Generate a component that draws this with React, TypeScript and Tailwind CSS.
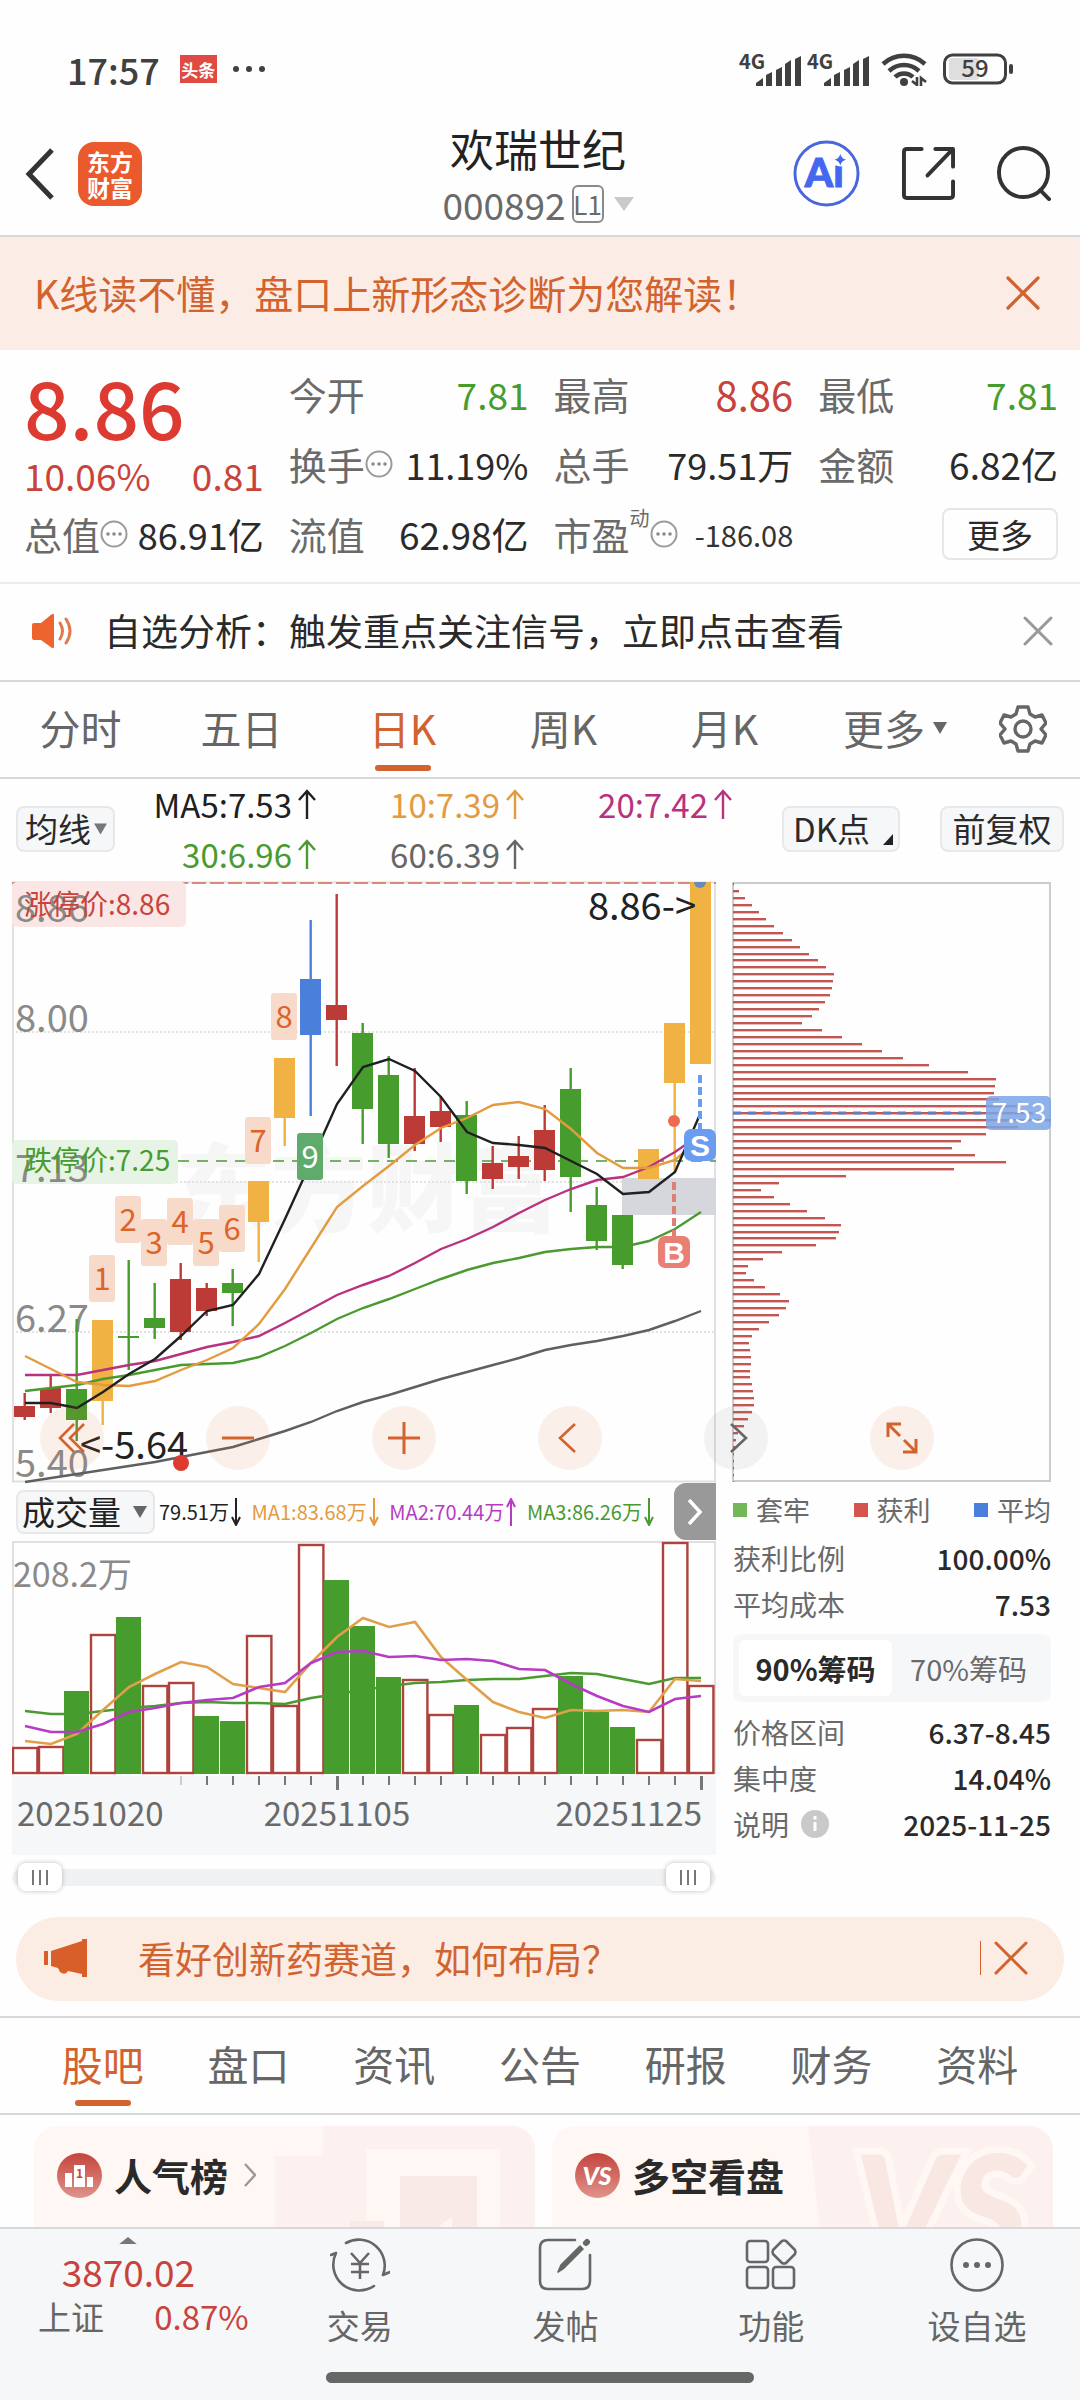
import React, { useState } from "react";
import { X } from "lucide-react";

type Tone = "red" | "green" | "yellow" | "blue";

const TONE: Record<Tone, string> = {
  red: "#bd3b36",
  green: "#479c2e",
  yellow: "#f0b243",
  blue: "#4a7fdb",
};

// [tone, high, body top, body bottom, low] in chart units
const CANDLES: [Tone, number, number, number, number][] = [
  ["red", 511, 524, 535, 538],
  ["red", 492, 506, 526, 531],
  ["green", 437, 507, 538, 559],
  ["yellow", 438, 438, 519, 543],
  ["green", 378, 454, 456, 488],
  ["green", 401, 436, 446, 457],
  ["red", 381, 397, 450, 458],
  ["red", 401, 406, 429, 434],
  ["green", 387, 401, 411, 444],
  ["yellow", 299, 299, 340, 380],
  ["yellow", 176, 176, 236, 264],
  ["blue", 38, 97, 153, 234],
  ["red", 12, 123, 138, 184],
  ["green", 141, 151, 227, 262],
  ["green", 174, 193, 262, 276],
  ["red", 186, 234, 262, 269],
  ["red", 214, 229, 245, 260],
  ["green", 219, 233, 299, 312],
  ["red", 264, 281, 297, 307],
  ["red", 254, 274, 285, 297],
  ["red", 223, 248, 288, 299],
  ["green", 186, 207, 295, 330],
  ["green", 305, 323, 359, 368],
  ["green", 333, 333, 383, 387],
  ["yellow", 267, 267, 297, 297],
  ["yellow", 141, 141, 201, 290],
  ["yellow", 0, 0, 182, 182],
];

const MA_LINES: { color: string; values: number[] }[] = [
  { color: "#5f5f5f", values: [600, 596, 592, 588, 584, 580, 575, 570, 565, 557, 549, 540, 529, 520, 513, 505, 497, 490, 483, 476, 468, 463, 459, 454, 448, 439, 429] },
  { color: "#4a9a30", values: [509, 506, 503, 497, 493, 488, 483, 482, 481, 475, 464, 451, 437, 426, 417, 407, 397, 388, 381, 376, 370, 367, 365, 365, 359, 347, 330] },
  { color: "#b8327f", values: [493, 493, 493, 488, 483, 479, 472, 465, 460, 454, 441, 427, 413, 403, 394, 381, 367, 357, 345, 331, 318, 307, 298, 295, 285, 270, 252] },
  { color: "#e39b3f", values: [474, 487, 500, 503, 504, 499, 488, 478, 466, 442, 407, 366, 325, 304, 284, 263, 246, 236, 223, 220, 227, 247, 271, 286, 286, 278, 256] },
  { color: "#202020", values: [521, 521, 526, 510, 492, 477, 454, 429, 423, 392, 337, 280, 222, 185, 177, 189, 215, 250, 261, 263, 266, 279, 292, 312, 310, 290, 230] },
];

const COUNTS = [373, 314, 337, 316, 337, 323, 235, 111, 251];

// [is a falling day, bar top]
const VOLUMES: [number, number][] = [
  [0, 206], [0, 205], [1, 150], [0, 93], [1, 76], [0, 144], [0, 141], [1, 175], [1, 180],
  [0, 94], [0, 164], [0, 3], [1, 39], [1, 85], [1, 136], [0, 138], [0, 173], [1, 164],
  [0, 193], [0, 186], [0, 167], [1, 135], [1, 171], [1, 186], [0, 198], [0, 1], [0, 144],
];

const VOLUME_LINES: { color: string; values: number[] }[] = [
  { color: "#4a9a30", values: [170, 173, 173, 170, 167, 165, 162, 161, 162, 162, 163, 157, 153, 149, 145, 142, 141, 139, 138, 138, 135, 132, 133, 138, 143, 137, 137] },
  { color: "#e0a04a", values: [200, 203, 193, 169, 146, 133, 121, 126, 143, 147, 151, 122, 96, 77, 86, 81, 116, 139, 161, 171, 177, 169, 170, 169, 171, 138, 140] },
  { color: "#b63cc4", values: [185, 191, 191, 183, 171, 167, 162, 159, 157, 146, 142, 122, 111, 110, 116, 115, 119, 118, 120, 128, 129, 143, 155, 165, 171, 158, 155] },
];

const CHIPS = [
  1, 6, 12, 19, 26, 33, 41, 50, 59, 67, 76, 85, 93, 101, 100, 99, 97, 92, 86, 79, 69, 89, 109, 129, 149, 170,
  196, 235, 263, 262, 261, 266, 284, 300, 318, 285, 253, 228, 219, 242, 273, 221, 113, 46, 28, 41, 57, 74, 92,
  108, 106, 103, 83, 49, 30, 15, 13, 21, 32, 47, 56, 53, 46, 36, 26, 19, 16, 17, 18, 18, 17, 17, 19, 20, 21,
  21, 19, 15, 11, 5, 3, 2, 1, 1, 1, 1, 1,
];

const path = (values: number[]) => values.map((v, i) => `${13 + i * 26},${v}`).join(" ");

function Dots() {
  return (
    <svg viewBox="0 0 28 28" className="size-7 shrink-0" aria-hidden="true">
      <circle cx="14" cy="14" r="12.5" fill="none" stroke="#9a9a9a" strokeWidth="2" />
      <g fill="#8a8a8a">
        <circle cx="8" cy="14" r="1.8" />
        <circle cx="14" cy="14" r="1.8" />
        <circle cx="20" cy="14" r="1.8" />
      </g>
    </svg>
  );
}

function Signal() {
  return (
    <svg viewBox="0 0 62 34" className="h-[34px] w-[62px] overflow-visible" aria-label="4G">
      <text x="0" y="17" fontSize="20" fontWeight="700" fill="#404040">4G</text>
      <g fill="#404040">
        <path d="M17 34v-3l7-5v8z" />
        <path d="M27 34V23l6-3v14z" />
        <path d="M37 34V18l6-3v19z" />
        <path d="M46 34V12l6-4v26z" />
        <path d="M56 34V7l6-3v30z" />
      </g>
    </svg>
  );
}

function StatusBar() {
  return (
    <div className="flex h-[114px] items-center pt-[24px] pr-[67px] pl-[67px] text-[#404040]">
      <span className="text-[36px] leading-none font-medium">17:57</span>
      <span className="ml-5 flex h-7 w-[37px] items-center justify-center bg-[#df4b43] text-[17px] leading-none font-bold text-white">
        头条
      </span>
      <span className="ml-4 flex gap-[7px]">
        <i className="size-[6px] rounded-full bg-[#404040]" />
        <i className="size-[6px] rounded-full bg-[#404040]" />
        <i className="size-[6px] rounded-full bg-[#404040]" />
      </span>
      <div className="ml-auto flex items-center">
        <Signal />
        <span className="w-[6px]" />
        <Signal />
        <svg viewBox="0 0 46 34" className="ml-3 h-[34px] w-[46px]" aria-hidden="true">
          <g fill="none" stroke="#404040" strokeWidth="4.5">
            <path d="M2 12a31 31 0 0 1 42 0" />
            <path d="M8 19a22 22 0 0 1 30 0" />
            <path d="M14 25a13 13 0 0 1 18 0" />
          </g>
          <circle cx="23" cy="30" r="4" fill="#404040" />
          <path d="M36 25v8l-5-4M40 34v-8l5 4" fill="none" stroke="#404040" strokeWidth="2.6" />
        </svg>
        <svg viewBox="0 0 70 32" className="ml-4 h-8 w-[70px] overflow-visible" aria-label="59%">
          <rect x="6" y="5" width="30" height="22" rx="3" fill="#dedede" />
          <rect x="1.5" y="2" width="61" height="28" rx="8" fill="none" stroke="#404040" strokeWidth="3" />
          <rect x="66" y="11" width="4" height="10" rx="2" fill="#404040" />
          <text x="32" y="24" textAnchor="middle" fontSize="24" fontWeight="500" fill="#404040">59</text>
        </svg>
      </div>
    </div>
  );
}

function Header() {
  return (
    <header className="grid h-[123px] grid-cols-[1fr_auto_1fr] items-center border-b-2 border-[#d8d8d8] pr-7 pb-[2px] pl-6">
      <div className="flex items-center gap-6">
        <button aria-label="返回">
          <svg viewBox="0 0 30 52" className="h-[52px] w-[30px]" fill="none" stroke="#333" strokeWidth="5">
            <path d="M28 2 5 26l23 24" />
          </svg>
        </button>
        <span className="flex size-16 flex-col items-center justify-center rounded-2xl bg-[#ea5a2d] text-[23px] leading-[26px] font-bold text-white">
          <span>东方</span>
          <span>财富</span>
        </span>
      </div>
      <div className="flex flex-col items-center">
        <h1 className="text-[44px] leading-[60px] text-[#222]">欢瑞世纪</h1>
        <button className="flex items-center text-[#6a6a6a]">
          <span className="text-[37px] leading-[52px]">000892</span>
          <span className="ml-[6px] flex h-[38px] w-8 items-center justify-center rounded-md border-2 border-[#8a8a8a] text-[26px] leading-none">
            L1
          </span>
          <svg viewBox="0 0 20 14" className="ml-[10px] h-[14px] w-5" aria-hidden="true">
            <path d="M0 0h20L10 14z" fill="#c9c9c9" />
          </svg>
        </button>
      </div>
      <div className="flex items-center justify-end gap-[42px]">
        <button aria-label="Ai">
          <svg viewBox="0 0 68 68" className="size-[67px]">
            <circle cx="34" cy="34" r="32" fill="none" stroke="#4a66dc" strokeWidth="3" />
            <text x="12" y="48" fontSize="41" fontWeight="900" fontFamily="Lato, sans-serif" fill="#4467f0" stroke="#4467f0" strokeWidth="1">Ai</text>
            <circle cx="48" cy="20" r="7" fill="#fff" />
            <path d="M48 14q1 5 6 6-5 1-6 6-1-5-6-6 5-1 6-6z" fill="#4467f0" />
          </svg>
        </button>
        <button aria-label="分享">
          <svg viewBox="0 0 54 54" className="size-[53px]" fill="none" stroke="#333" strokeWidth="4" strokeLinecap="round" strokeLinejoin="round">
            <path d="M20 2H5Q2 2 2 5v44q0 3 3 3h44q3 0 3-3V35" />
            <path d="M34 2h18v18M51 3 26 29" />
          </svg>
        </button>
        <button aria-label="搜索">
          <svg viewBox="0 0 56 56" className="size-[55px]" fill="none" stroke="#333" strokeWidth="4" strokeLinecap="round">
            <circle cx="27" cy="27" r="25" />
            <path d="m44 45 9 9" />
          </svg>
        </button>
      </div>
    </header>
  );
}

function Quote({ label, value, tone, info }: { label: string; value: string; tone: string; info?: boolean }) {
  return (
    <div className="flex items-center leading-none">
      <dt className="flex items-center text-[38px] text-[#6a6a6a]">
        {label}
        {info && <Dots />}
      </dt>
      <dd className={"ml-auto whitespace-nowrap " + tone}>{value}</dd>
    </div>
  );
}

function Quotes() {
  return (
    <section className="border-b-2 border-[#ececec] pt-[9px] pr-[22px] pb-[13px] pl-6">
      <dl className="grid auto-rows-[70px] grid-cols-4 gap-x-[25px]">
        <div className="row-span-2 flex flex-col text-[#c8433b]">
          <dt className="text-[80px] leading-[92px] font-medium text-[#dd3b32]">8.86</dt>
          <dd className="flex justify-between text-[37px] leading-[48px]">
            <span>10.06%</span>
            <span>0.81</span>
          </dd>
        </div>
        <Quote label="今开" value="7.81" tone="text-[37px] text-[#479c2e]" />
        <Quote label="最高" value="8.86" tone="text-[40px] text-[#c8433b]" />
        <Quote label="最低" value="7.81" tone="text-[37px] text-[#479c2e]" />
        <Quote label="换手" value="11.19%" tone="text-[36px] text-[#2a2a2a]" info />
        <Quote label="总手" value="79.51万" tone="text-[36px] text-[#2a2a2a]" />
        <Quote label="金额" value="6.82亿" tone="text-[37px] text-[#2a2a2a]" />
        <Quote label="总值" value="86.91亿" tone="text-[36px] text-[#2a2a2a]" info />
        <Quote label="流值" value="62.98亿" tone="text-[37px] text-[#2a2a2a]" />
        <div className="flex items-center leading-none">
          <dt className="flex items-center text-[38px] text-[#6a6a6a]">
            市盈
            <sup className="mb-3 text-[20px]">动</sup>
            <Dots />
          </dt>
          <dd className="ml-auto text-[29px] text-[#333]">-186.08</dd>
        </div>
        <div className="flex items-center justify-end">
          <button className="h-[52px] w-[116px] rounded-lg border-2 border-[#e6e6e6] text-[33px] leading-none text-[#2a2a2a]">
            更多
          </button>
        </div>
      </dl>
    </section>
  );
}

function Notice() {
  return (
    <section className="flex h-[98px] items-center border-b-2 border-[#d8d8d8] pr-4 pb-[3px] pl-8">
      <svg viewBox="0 0 40 34" className="h-[34px] w-10" aria-hidden="true">
        <path d="M2 9h7L20 0q2-1 2 2v30q0 3-2 2L9 26H2q-2 0-2-2V11q0-2 2-2z" fill="#ee642f" />
        <path d="M28 9q5 8 0 16M34 5q8 12 0 24" fill="none" stroke="#e07a4c" strokeWidth="3" strokeLinecap="round" />
      </svg>
      <p className="ml-8 text-[37px] leading-none text-[#2a2a2a]">自选分析：触发重点关注信号，立即点击查看</p>
      <button className="ml-auto text-[#999]" aria-label="关闭">
        <X className="size-[52px]" strokeWidth={1.4} />
      </button>
    </section>
  );
}

const PERIODS = ["分时", "五日", "日K", "周K", "月K"];

function PeriodTabs() {
  const [active, setActive] = useState("日K");
  return (
    <nav className="flex h-[97px] border-b-2 border-[#d8d8d8] text-[41px] leading-none text-[#666]">
      {PERIODS.map((p) => (
        <button
          key={p}
          onClick={() => setActive(p)}
          className={"relative flex-[161] pb-1 " + (p === active ? "text-[#d2632f]" : "")}
        >
          {p}
          {p === active && (
            <i className="absolute bottom-[6px] left-1/2 h-[6px] w-14 -translate-x-1/2 rounded-full bg-[#d2632f]" />
          )}
        </button>
      ))}
      <button className="flex flex-[180] items-center justify-center gap-2 pb-1">
        更多
        <svg viewBox="0 0 14 12" className="h-3 w-[14px]" aria-hidden="true">
          <path d="M0 0h14L7 12z" fill="#666" />
        </svg>
      </button>
      <button className="flex w-[95px] items-center pb-[2px] pl-[14px]" aria-label="设置">
        <Gear />
      </button>
    </nav>
  );
}

function Gear() {
  return (
    <svg viewBox="0 0 48 48" className="size-12" fill="none" stroke="#666" strokeWidth="3.4" strokeLinejoin="round">
      <path d="M19 2h10l2 7 5 3 7-2 4 8-5 6 5 6-4 8-7-2-5 3-2 7H19l-2-7-5-3-7 2-4-8 5-6-5-6 4-8 7 2 5-3z" />
      <circle cx="24" cy="24" r="8" />
    </svg>
  );
}

function Average({ text, tone }: { text: string; tone: string }) {
  return (
    <span className={"flex items-center justify-end gap-[6px] " + tone}>
      {text}
      <svg viewBox="0 0 18 30" className="h-[30px] w-[18px]" fill="none" stroke="currentColor" strokeWidth="2.4" aria-hidden="true">
        <path d="M9 30V2M1 11l8-9 8 9" />
      </svg>
    </span>
  );
}

function AverageBar() {
  return (
    <section className="flex h-[103px] items-center px-4 pb-1 text-[33px] leading-none text-[#2a2a2a]">
      <label className="relative block w-[99px] shrink-0">
        <select
          aria-label="均线"
          className="block h-[46px] w-full appearance-none rounded-lg border-2 border-[#e6e8ea] bg-[#f6f7f9] pl-[7px] leading-none"
        >
          <option>均线</option>
        </select>
        <svg viewBox="0 0 14 12" className="pointer-events-none absolute top-[17px] right-2 h-3 w-[13px]" aria-hidden="true">
          <path d="M0 0h14L7 12z" fill="#777" />
        </svg>
      </label>
      <div className="grid grid-cols-[201px_208px_208px] text-[33px] leading-[50px] whitespace-nowrap">
        <Average text="MA5:7.53" tone="text-[#202020]" />
        <Average text="10:7.39" tone="text-[#e39b3f]" />
        <Average text="20:7.42" tone="text-[#b8327f]" />
        <Average text="30:6.96" tone="text-[#4a9a30]" />
        <Average text="60:6.39" tone="text-[#666]" />
      </div>
      <div className="ml-auto flex gap-10">
        <button className="relative h-[46px] w-[118px] rounded-lg border-2 border-[#e6e8ea] bg-[#f6f7f9] pl-[9px] text-left">
          DK点
          <svg viewBox="0 0 10 11" className="absolute right-[5px] bottom-[5px] h-[11px] w-[10px]" aria-hidden="true">
            <path d="M10 0v11H0z" fill="#222" />
          </svg>
        </button>
        <button className="h-[46px] w-[124px] rounded-lg border-2 border-[#e6e8ea] bg-[#f6f7f9]">前复权</button>
      </div>
    </section>
  );
}

function PriceChart() {
  return (
    <svg viewBox="0 0 704 600" className="block h-auto w-full overflow-visible">
      <text x="163" y="342" fontSize="96" fontWeight="900" fill="#f6f6f7">东方财富</text>
      <rect x="1" y="0.5" width="702" height="599" fill="none" stroke="#e0e0e0" strokeWidth="2" />
      <path d="M0 150h704M0 300h704M0 450h704" stroke="#e2e2e2" strokeWidth="2" strokeDasharray="2 2" />
      <path d="M0 1h704" stroke="#d98a7c" strokeWidth="2" strokeDasharray="14 4" />
      <rect x="0" y="0" width="174" height="45" rx="5" fill="#fbe6e6" />
      <rect x="0" y="258" width="166" height="44" rx="5" fill="#e6f3e5" />
      <path d="M166 279h538" stroke="#4a9a30" strokeWidth="1.4" strokeDasharray="11 8" />
      <rect x="610" y="296" width="94" height="37" fill="#d5d7dc" />
      <g fontSize="38" fill="#8a8a8a">
        <text x="3" y="40">8.86</text>
        <text x="3" y="150">8.00</text>
        <text x="3" y="300">7.13</text>
        <text x="3" y="450">6.27</text>
        <text x="3" y="595">5.40</text>
      </g>
      <text x="12" y="33" fontSize="28" fill="#c8433b">涨停价:8.86</text>
      <text x="12" y="289" fontSize="28" fill="#479c2e">跌停价:7.25</text>
      {CANDLES.map(([tone, high, top, bottom, low], i) => (
        <g key={i} fill={TONE[tone]}>
          <rect x={11.5 + i * 26} y={high} width="2.4" height={low - high} />
          <rect x={2 + i * 26} y={top} width="21" height={bottom - top} />
        </g>
      ))}
      {MA_LINES.map((line) => (
        <polyline key={line.color} points={path(line.values)} fill="none" stroke={line.color} strokeWidth="2.4" />
      ))}
      {COUNTS.map((y, i) => (
        <g key={y + "-" + i}>
          <rect x={77 + i * 26} y={y} width="26" height="47" rx="3" fill={i === 8 ? "#5fab6b" : "#f7dac9"} />
          <text x={90 + i * 26} y={y + 35} textAnchor="middle" fontSize="31" fill={i === 8 ? "#fff" : "#dc6428"}>
            {i + 1}
          </text>
        </g>
      ))}
      <circle cx="662" cy="239" r="6" fill="#ee6a50" />
      <path d="M682 0h12a6 6 0 0 1-12 0z" fill="#6a8bb5" />
      <path d="M688 193v54" stroke="#6a9cf0" strokeWidth="4" strokeDasharray="8 4" />
      <path d="M662 300v54" stroke="#dd7f74" strokeWidth="4" strokeDasharray="8 4" />
      <rect x="672" y="247" width="32" height="32" rx="7" fill="#6a9cf0" />
      <rect x="646" y="354" width="32" height="32" rx="7" fill="#e98074" />
      <g fontFamily="Liberation Sans, sans-serif" fontWeight="700" fontSize="30" fill="#fff" textAnchor="middle">
        <text x="688" y="274">S</text>
        <text x="662" y="381">B</text>
      </g>
      <g fontSize="38" fill="#222">
        <text x="68" y="577">&lt;-5.64</text>
        <text x="684" y="38" textAnchor="end">8.86-&gt;</text>
      </g>
      <circle cx="169" cy="581" r="8" fill="#dd3b32" />
    </svg>
  );
}

function ChipChart() {
  return (
    <svg viewBox="0 0 320 600" className="block h-auto w-full">
      <rect x="1" y="1" width="317" height="598" fill="none" stroke="#cccccc" strokeWidth="2" />
      {CHIPS.map((w, i) => (
        <rect key={i} x="1" y={Math.round(1 + i * 6.95)} width={w} height="2.4" fill="#c25650" />
      ))}
      <path d="M1 231h255" stroke="#5b7fc9" strokeWidth="3" strokeDasharray="8 7" />
      <rect x="254" y="214" width="65" height="34" rx="5" fill="#7ba4e6" fillOpacity="0.85" />
      <text x="287" y="241" textAnchor="middle" fontSize="28" fill="#fff">7.53</text>
    </svg>
  );
}

const ROUND = "flex size-16 items-center justify-center rounded-full bg-[#e0742f]/10";

function ChartControls() {
  return (
    <div className="absolute top-[524px] right-[146px] left-10 flex justify-between text-[#d2632f]">
      <button className={ROUND} aria-label="快退">
        <svg viewBox="0 0 32 32" className="size-8" fill="none" stroke="currentColor" strokeWidth="2.6"><path d="M18 2 4 16l14 14M28 2 14 16l14 14" /></svg>
      </button>
      <button className={ROUND} aria-label="缩小">
        <svg viewBox="0 0 32 32" className="size-8" fill="none" stroke="currentColor" strokeWidth="3"><path d="M0 16h32" /></svg>
      </button>
      <button className={ROUND} aria-label="放大">
        <svg viewBox="0 0 32 32" className="size-8" fill="none" stroke="currentColor" strokeWidth="3"><path d="M0 16h32M16 0v32" /></svg>
      </button>
      <button className={ROUND} aria-label="左移">
        <svg viewBox="0 0 32 32" className="size-8" fill="none" stroke="currentColor" strokeWidth="2.6"><path d="M21 2 6 16l15 14" /></svg>
      </button>
      <button className="flex size-16 items-center justify-center rounded-full bg-[#888888]/10 text-[#666]" aria-label="右移">
        <svg viewBox="0 0 32 32" className="size-8" fill="none" stroke="currentColor" strokeWidth="2.6"><path d="m11 2 15 14-15 14" /></svg>
      </button>
      <button className={ROUND} aria-label="全屏">
        <svg viewBox="0 0 32 32" className="size-8" fill="none" stroke="currentColor" strokeWidth="3"><path d="M15 2H2v13M3 3l11 11M17 30h13V17M29 29 18 18" /></svg>
      </button>
    </div>
  );
}

function VolumeValue({ text, tone, up }: { text: string; tone: string; up?: boolean }) {
  return (
    <span className={"flex items-center gap-[2px] " + tone}>
      {text}
      <svg viewBox="0 0 10 28" className={"h-7 w-[10px] " + (up ? "" : "rotate-180")} fill="none" stroke="currentColor" strokeWidth="2" aria-hidden="true">
        <path d="M5 28V1M1 9l4-8 4 8" />
      </svg>
    </span>
  );
}

function VolumeHeader() {
  return (
    <div className="flex h-[59px] items-center pl-1">
      <label className="relative block w-[139px] shrink-0">
        <select
          aria-label="成交量"
          className="block h-[44px] w-full appearance-none rounded-lg border-2 border-[#e6e8ea] bg-[#f6f7f9] pl-1 text-[33px] leading-none text-[#222]"
        >
          <option>成交量</option>
        </select>
        <svg viewBox="0 0 14 12" className="pointer-events-none absolute top-[16px] right-2 h-3 w-[14px]" aria-hidden="true">
          <path d="M0 0h14L7 12z" fill="#666" />
        </svg>
      </label>
      <div className="flex flex-1 justify-between pr-5 pl-1 text-[20px] leading-none whitespace-nowrap">
        <VolumeValue text="79.51万" tone="text-[#222]" />
        <VolumeValue text="MA1:83.68万" tone="text-[#e39b3f]" />
        <VolumeValue text="MA2:70.44万" tone="text-[#b63cc4]" up />
        <VolumeValue text="MA3:86.26万" tone="text-[#4a9a30]" />
      </div>
      <button className="flex h-[57px] w-[42px] shrink-0 items-center justify-center rounded-l-xl bg-[#999]" aria-label="展开">
        <svg viewBox="0 0 14 26" className="h-[26px] w-[14px]" fill="none" stroke="#fff" strokeWidth="3.5">
          <path d="m1 1 11 12L1 25" />
        </svg>
      </button>
    </div>
  );
}

function VolumeChart() {
  return (
    <svg viewBox="0 0 704 314" className="block h-auto w-full">
      <rect x="0" y="235" width="704" height="79" fill="#f6f7f9" />
      <path d="M0 1h704M1 0v233M703 0v233" stroke="#e0e0e0" strokeWidth="2" />
      {VOLUMES.map(([fall, top], i) =>
        fall ? (
          <rect key={i} x={i * 26} y={top} width="25" height={233 - top} fill="#479c2e" />
        ) : (
          <rect key={i} x={i * 26 + 1} y={top + 1} width="24.4" height={231 - top} fill="#fff" stroke="#ad433c" strokeWidth="2.4" />
        ),
      )}
      {VOLUME_LINES.map((line) => (
        <polyline key={line.color} points={path(line.values)} fill="none" stroke={line.color} strokeWidth="2.6" />
      ))}
      <text x="1" y="46" fontSize="34" fill="#8a8a8a">208.2万</text>
      {VOLUMES.map((_, i) =>
        i > 5 ? (
          <rect
            key={i}
            x={12 + i * 26}
            y="235"
            width={i === 12 || i === 26 ? 3 : 2}
            height={i === 12 || i === 26 ? 14 : 9}
            fill={i === 6 ? "#cccccc" : "#777777"}
          />
        ) : null,
      )}
      <g fontSize="33" fill="#6a6a6a">
        <text x="5" y="285">20251020</text>
        <text x="325" y="285" textAnchor="middle">20251105</text>
        <text x="690" y="285" textAnchor="end">20251125</text>
      </g>
    </svg>
  );
}

const THUMB =
  "pointer-events-none absolute inset-x-[6px] top-0 h-7 appearance-none bg-transparent [&::-webkit-slider-thumb]:pointer-events-auto [&::-webkit-slider-thumb]:h-7 [&::-webkit-slider-thumb]:w-11 [&::-webkit-slider-thumb]:appearance-none [&::-webkit-slider-thumb]:rounded-lg [&::-webkit-slider-thumb]:bg-white [&::-webkit-slider-thumb]:bg-[repeating-linear-gradient(90deg,#777_0_2px,transparent_2px_7px)] [&::-webkit-slider-thumb]:bg-[length:16px_15px] [&::-webkit-slider-thumb]:bg-center [&::-webkit-slider-thumb]:bg-no-repeat [&::-webkit-slider-thumb]:shadow-[0_0_5px_rgba(0,0,0,0.25)]";

function RangeBrush() {
  return (
    <div className="relative mt-2 flex h-7 items-center">
      <div className="h-[17px] w-full rounded-full bg-[#f0f1f3]" />
      <input type="range" aria-label="起始日期" min="0" max="100" defaultValue="0" className={THUMB} />
      <input type="range" aria-label="结束日期" min="0" max="100" defaultValue="100" className={THUMB} />
    </div>
  );
}

function Row({ label, value, children }: { label: string; value: string; children?: React.ReactNode }) {
  return (
    <div className="flex h-[46px] items-center justify-between">
      <dt className="flex items-center gap-3 text-[#6a6a6a]">
        {label}
        {children}
      </dt>
      <dd className="font-medium text-[#2a2a2a]">{value}</dd>
    </div>
  );
}

function ChipPanel() {
  const [share, setShare] = useState("90%筹码");
  return (
    <div className="pr-px pl-px text-[28px] leading-none">
      <ul className="flex h-[53px] items-center justify-between pt-[2px] text-[27px] text-[#6a6a6a]">
        <li className="flex items-center gap-[9px]"><i className="size-[14px] bg-[#74b757]" />套牢</li>
        <li className="flex items-center gap-[9px]"><i className="size-[14px] bg-[#d6544e]" />获利</li>
        <li className="flex items-center gap-[9px]"><i className="size-[14px] bg-[#4a7fdb]" />平均</li>
      </ul>
      <dl>
        <Row label="获利比例" value="100.00%" />
        <Row label="平均成本" value="7.53" />
      </dl>
      <div className="my-[7px] flex h-[68px] rounded-lg bg-[#f6f7f9] p-[6px] text-[29px]">
        {["90%筹码", "70%筹码"].map((s) => (
          <button
            key={s}
            onClick={() => setShare(s)}
            className={"flex-1 rounded-md " + (s === share ? "bg-white font-bold text-[#2a2a2a]" : "text-[#6a6a6a]")}
          >
            {s}
          </button>
        ))}
      </div>
      <dl>
        <Row label="价格区间" value="6.37-8.45" />
        <Row label="集中度" value="14.04%" />
        <Row label="说明" value="2025-11-25">
          <svg viewBox="0 0 28 28" className="size-7" aria-hidden="true">
            <circle cx="14" cy="14" r="14" fill="#c9c9c9" />
            <path d="M14 12v9M14 6v3.5" stroke="#fff" strokeWidth="3" />
          </svg>
        </Row>
      </dl>
    </div>
  );
}

function Promo() {
  return (
    <section className="mx-4 mt-[26px] flex h-[84px] items-center rounded-full bg-[#fbece4] pr-[23px] pb-[2px] pl-7 text-[#d2632f]">
      <svg viewBox="0 0 44 38" className="h-[38px] w-11" fill="#d95f2a" aria-hidden="true">
        <path d="M0 12h4v14H0zM7 12 38 2V0h5v38h-5v-3l-14-3q-3 5-8 1l-2-4-7-2z" />
      </svg>
      <p className="ml-[50px] text-[37px] leading-none">看好创新药赛道，如何布局？</p>
      <i className="ml-auto h-[34px] w-px bg-[#d2632f]" />
      <button aria-label="关闭">
        <X className="size-[60px]" strokeWidth={1.2} />
      </button>
    </section>
  );
}

const SECTIONS = ["股吧", "盘口", "资讯", "公告", "研报", "财务", "资料"];

function SectionTabs() {
  const [active, setActive] = useState("股吧");
  return (
    <nav className="mt-[15px] flex h-[99px] border-y-2 border-[#d8d8d8] px-[30px] text-[41px] leading-none text-[#666]">
      {SECTIONS.map((s) => (
        <button
          key={s}
          onClick={() => setActive(s)}
          className={"relative flex-1 pb-1 " + (s === active ? "text-[#d2632f]" : "")}
        >
          {s}
          {s === active && (
            <i className="absolute bottom-[7px] left-1/2 h-[6px] w-14 -translate-x-1/2 rounded-full bg-[#d2632f]" />
          )}
        </button>
      ))}
    </nav>
  );
}

function Cards() {
  return (
    <section className="grid h-[112px] flex-1 grid-cols-2 gap-[17px] overflow-hidden pt-[11px] pr-[27px] pl-[34px] text-[38px] leading-none font-bold text-[#2a2a2a]">
      <article className="relative overflow-hidden rounded-t-3xl bg-[#fef7f4]">
        <svg viewBox="0 0 260 101" className="absolute top-0 right-0 h-[101px] w-[260px]" aria-hidden="true">
          <path d="M48 0h212v101H0V30h48z" fill="#fcf1ee" />
          <path d="M91 23h134v78h-24V50h-76v51H91z" fill="#fef7f4" />
          <path d="M125 50h77v51h-77zM75 95h34v6H75z" fill="#f9e9e7" />
          <path d="m163 101 14-10v10z" fill="#fef7f4" />
        </svg>
        <button className="relative flex h-[98px] items-center pl-[23px]">
          <svg viewBox="0 0 45 45" className="size-[45px]" aria-hidden="true">
            <defs>
              <linearGradient id="badge" x1="0" y1="0" x2="0" y2="1">
                <stop offset="0" stopColor="#c4453d" />
                <stop offset="1" stopColor="#e0938b" />
              </linearGradient>
            </defs>
            <circle cx="22.5" cy="22.5" r="22.5" fill="url(#badge)" />
            <path d="M8 20h7v14H8zM17 12h11v22H17zM30 24h6v10h-6z" fill="#fff" />
            <text x="22.5" y="25" textAnchor="middle" fontSize="12" fill="#c4453d">1</text>
          </svg>
          <span className="ml-3">人气榜</span>
          <svg viewBox="0 0 12 24" className="ml-4 h-6 w-3" fill="none" stroke="#999" strokeWidth="2.4">
            <path d="m1 1 10 11L1 23" />
          </svg>
        </button>
      </article>
      <article className="relative overflow-hidden rounded-t-3xl bg-[#fef7f4]">
        <svg viewBox="0 0 245 101" className="absolute top-0 right-0 h-[101px] w-[245px]" aria-hidden="true">
          <path d="M0 0h245v101H12z" fill="#fcf1ee" />
          <text x="46" y="138" fontSize="150" fontWeight="900" fontStyle="italic" fontFamily="Lato, sans-serif" fill="#f9e7e4" stroke="#fef7f4" strokeWidth="14" style={{ paintOrder: "stroke" }}>VS</text>
        </svg>
        <div className="relative flex h-[98px] items-center pl-[23px]">
          <svg viewBox="0 0 45 45" className="size-[45px]" aria-hidden="true">
            <circle cx="22.5" cy="22.5" r="22.5" fill="url(#badge)" />
            <text x="22" y="32" textAnchor="middle" fontSize="25" fontWeight="900" fontStyle="italic" fontFamily="Lato, sans-serif" fill="#fff">VS</text>
          </svg>
          <span className="ml-3">多空看盘</span>
        </div>
      </article>
    </section>
  );
}

function NavItem({ label, children }: { label: string; children: React.ReactNode }) {
  return (
    <button className="flex flex-[206] flex-col items-center justify-start pt-[6px]">
      <svg viewBox="0 0 60 60" className="size-[60px]" fill="none" stroke="#666" strokeWidth="2.6" strokeLinecap="round" strokeLinejoin="round" aria-hidden="true">
        {children}
      </svg>
      <span className="mt-[10px] text-[33px] leading-[40px]">{label}</span>
    </button>
  );
}

function BottomNav() {
  return (
    <footer className="border-t-2 border-[#d8d8d8] bg-[#f6f7f9] text-[#666]">
      <nav className="flex h-[143px]">
        <button className="flex flex-[257] flex-col items-center justify-start pt-2">
          <svg viewBox="0 0 20 8" className="h-[7px] w-5" aria-hidden="true">
            <path d="M0 8 10 0l10 8z" fill="#777" />
          </svg>
          <span className="mt-[2px] text-[37px] leading-[50px] text-[#c8433b]">3870.02</span>
          <span className="flex w-full justify-between pr-2 pl-[38px] text-[33px] leading-[40px]">
            <span>上证</span>
            <span className="text-[#c8433b]">0.87%</span>
          </span>
        </button>
        <NavItem label="交易">
          <path d="M16 8a26 26 0 0 1 37 32l7-3M44 51A26 26 0 0 1 6 18l-5 2" />
          <path d="M21 18l9 10 9-10M30 28v16M21 29h18M21 37h18" strokeLinecap="butt" />
        </NavItem>
        <NavItem label="发帖">
          <path d="M40 5H13q-8 0-8 8v33q0 8 8 8h34q8 0 8-8V20" />
          <path d="M23 37l3-7 19-19 3 3-19 19z" fill="#666" strokeWidth="1.6" />
          <path d="m51 8 1-1" strokeWidth="6" />
        </NavItem>
        <NavItem label="功能">
          <rect x="6" y="6" width="21" height="21" rx="3" />
          <rect x="6" y="32" width="21" height="21" rx="3" />
          <rect x="32" y="32" width="21" height="21" rx="3" />
          <path d="M41 6q2-1 4 0l9 9q1 2 0 4l-9 9q-2 1-4 0l-9-9q-1-2 0-4z" />
        </NavItem>
        <NavItem label="设自选">
          <circle cx="30" cy="30" r="25.5" />
          <g fill="#666" stroke="none">
            <circle cx="19" cy="30" r="3" />
            <circle cx="30" cy="30" r="3" />
            <circle cx="41" cy="30" r="3" />
          </g>
        </NavItem>
      </nav>
      <div className="flex h-7 justify-center">
        <i className="h-[11px] w-[428px] rounded-full bg-[#666867]" />
      </div>
    </footer>
  );
}

export default function App() {
  return (
    <main className="flex min-h-screen flex-col bg-[#fefefe] font-['Noto_Sans_CJK_SC',sans-serif]">
      <StatusBar />
      <Header />
      <section className="flex h-[113px] items-center bg-[#fbede5] pr-[27px] pb-[2px] pl-[34px] text-[#d2632f]">
        <p className="text-[39px] leading-none">K线读不懂，盘口上新形态诊断为您解读！</p>
        <button className="ml-auto" aria-label="关闭">
          <X className="size-[60px]" strokeWidth={1.3} />
        </button>
      </section>
      <Quotes />
      <Notice />
      <PeriodTabs />
      <AverageBar />
      <section className="relative flex gap-4 pr-7 pl-3">
        <div className="min-w-0 flex-[704]">
          <PriceChart />
          <VolumeHeader />
          <VolumeChart />
          <RangeBrush />
        </div>
        <div className="min-w-0 flex-[320]">
          <ChipChart />
          <ChipPanel />
        </div>
        <ChartControls />
      </section>
      <Promo />
      <SectionTabs />
      <Cards />
      <BottomNav />
    </main>
  );
}
